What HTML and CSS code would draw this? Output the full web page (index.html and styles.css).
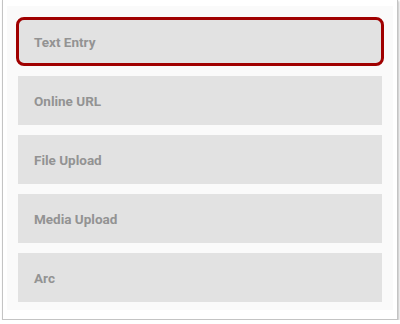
FILE: index.html
```html
<!DOCTYPE html>
<html>
<head>
<meta charset="utf-8">
<link rel="stylesheet" href="styles.css">
</head>
<body>
<div class="frame">
  <div class="panel">
    <div class="option option-active">Text Entry</div>
    <div class="option">Online URL</div>
    <div class="option">File Upload</div>
    <div class="option">Media Upload</div>
    <div class="option">Arc</div>
  </div>
</div>
</body>
</html>
```
FILE: styles.css
```css
html, body {
  margin: 0;
  padding: 0;
  background: #ffffff;
}
.frame {
  margin: 0 2px 0 2px;
  height: 320px;
  box-sizing: border-box;
  border: 1px solid #c4c4c4;
  border-top: none;
  box-shadow: 1px 1px 2px rgba(0,0,0,0.25);
  padding: 6px 4px 9px 4px;
  background: #ffffff;
}
.panel {
  background: #fafafa;
  height: 100%;
  box-sizing: border-box;
  padding: 11px 11px 0 11px;
  display: flex;
  flex-direction: column;
  gap: 10px;
}
.option {
  height: 49px;
  box-sizing: border-box;
  background: #e2e2e2;
  display: flex;
  align-items: center;
  padding: 1px 0 0 16px;
  font-family: Roboto, "Liberation Sans", sans-serif;
  font-weight: 700;
  font-size: 13.5px;
  color: #939393;
}
.option-active {
  margin: 0 -2px;
  border: 3px solid #a00000;
  border-radius: 8px;
  padding-left: 15px;
}
```
